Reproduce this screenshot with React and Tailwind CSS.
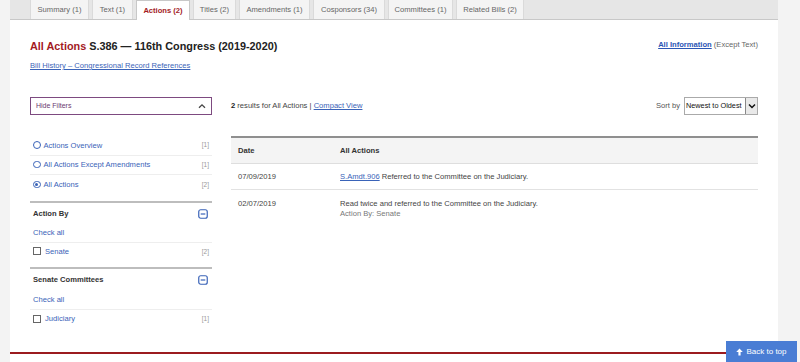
import React from "react";

const font = "font-['Liberation_Sans',Arial,Helvetica,sans-serif]";

function Tab({ label, active, w }) {
  return active ? (
    <div className={`${w} h-[20px] flex items-center justify-center bg-white border-x border-t border-[#c8c8c8] text-[#a31a1f] font-bold text-[7.6px] -mb-px`}>
      {label}
    </div>
  ) : (
    <div className={`${w} h-[19px] flex items-center justify-center bg-[#f4f4f4] border-x border-[#dadada] text-[#666] text-[7.6px]`}>
      {label}
    </div>
  );
}

function Radio({ checked }) {
  return (
    <span className="w-[7.5px] h-[7.5px] rounded-full border-[1.5px] border-[#3a63b8] flex items-center justify-center mr-[3px] shrink-0">
      {checked && <span className="w-[3px] h-[3px] rounded-full bg-[#3a63b8]" />}
    </span>
  );
}

function MinusBox() {
  return (
    <svg width="10" height="10" viewBox="0 0 10 10" className="mr-[2px]">
      <rect x="0.75" y="0.75" width="8.5" height="8.5" rx="2" fill="none" stroke="#3a63b8" strokeWidth="1.2" />
      <line x1="2.7" y1="5" x2="7.3" y2="5" stroke="#3a63b8" strokeWidth="1.2" />
    </svg>
  );
}

function CheckBox() {
  return <span className="w-[8px] h-[8px] border border-[#666] mr-[4px] shrink-0 bg-white" />;
}

export default function App() {
  const tabs = [
    ["Summary (1)", "w-[59px]"],
    ["Text (1)", "w-[41px]"],
    ["Actions (2)", "w-[54px]"],
    ["Titles (2)", "w-[43px]"],
    ["Amendments (1)", "w-[71px]"],
    ["Cosponsors (34)", "w-[72px]"],
    ["Committees (1)", "w-[65px]"],
    ["Related Bills (2)", "w-[68px]"],
  ];
  return (
    <div className={`${font} w-[800px] h-[362px] bg-[#f3f3f3] flex overflow-hidden relative`}>
      <div className="ml-[10px] w-[768px] h-full bg-white flex flex-col">
        {/* tab bar */}
        <div className="h-[20px] shrink-0 bg-[#e6e6e6] border-b border-[#c8c8c8] flex items-start pl-[20px] gap-[3px]">
          {tabs.map(([t, w]) => (
            <Tab key={t} label={t} w={w} active={t === "Actions (2)"} />
          ))}
        </div>

        <div className="px-[20px] flex-1 flex flex-col">
          {/* header */}
          <div className="mt-[19px] flex justify-between items-start">
            <div className="flex flex-col">
              <div className="text-[10.85px] leading-[14px] font-bold text-[#222]">
                <span className="text-[#a31a1f]">All Actions</span> S.386 — 116th Congress (2019-2020)
              </div>
              <a className="mt-[8px] text-[7.6px] leading-[10px] text-[#3a63b8] underline">
                Bill History – Congressional Record References
              </a>
            </div>
            <div className="mt-[1px] text-[7.6px] leading-[10px] text-[#666]">
              <a className="text-[#2b56b5] font-bold underline">All Information</a> (Except Text)
            </div>
          </div>

          {/* body */}
          <div className="mt-[26px] flex gap-[19px]">
            {/* sidebar */}
            <div className="w-[182px] shrink-0 flex flex-col text-[7.6px]">
              <div className="h-[18px] border border-[#7d4a80] px-[5px] flex items-center justify-between text-[#6b3a70]">
                <span className="text-[7px]">Hide Filters</span>
                <svg width="8" height="6" viewBox="0 0 8 6">
                  <path d="M1 4.8 L4 1.8 L7 4.8" fill="none" stroke="#444" strokeWidth="1.3" />
                </svg>
              </div>

              <div className="mt-[21px] flex flex-col">
                {[
                  ["Actions Overview", "[1]", false],
                  ["All Actions Except Amendments", "[1]", false],
                  ["All Actions", "[2]", true],
                ].map(([l, c, ch], i) => (
                  <div
                    key={l}
                    className={`h-[19.5px] flex items-center justify-between pl-[3px] pr-[3px] ${i < 2 ? "border-b border-[#eeeeee]" : ""}`}
                  >
                    <span className="flex items-center text-[#3a63b8]">
                      <Radio checked={ch} />
                      {l}
                    </span>
                    <span className="text-[#999] text-[6.5px]">{c}</span>
                  </div>
                ))}
              </div>

              <div className="mt-[6px] h-[2px] bg-[#bdbdbd]" />
              <div className="h-[22px] flex items-center justify-between pl-[3px] pr-[2px]">
                <span className="font-bold text-[#333]">Action By</span>
                <MinusBox />
              </div>
              <div className="h-[18px] flex items-center pl-[3px] border-b border-[#eeeeee] text-[#3a63b8]">Check all</div>
              <div className="h-[18px] flex items-center justify-between pl-[3px] pr-[3px]">
                <span className="flex items-center text-[#3a63b8]">
                  <CheckBox />
                  Senate
                </span>
                <span className="text-[#999] text-[6.5px]">[2]</span>
              </div>

              <div className="mt-[6px] h-[2px] bg-[#bdbdbd]" />
              <div className="h-[22px] flex items-center justify-between pl-[3px] pr-[2px]">
                <span className="font-bold text-[#333]">Senate Committees</span>
                <MinusBox />
              </div>
              <div className="h-[19px] flex items-center pl-[3px] border-b border-[#eeeeee] text-[#3a63b8]">Check all</div>
              <div className="h-[19px] flex items-center justify-between pl-[3px] pr-[3px]">
                <span className="flex items-center text-[#3a63b8]">
                  <CheckBox />
                  Judiciary
                </span>
                <span className="text-[#999] text-[6.5px]">[1]</span>
              </div>
            </div>

            {/* main */}
            <div className="flex-1 flex flex-col text-[7.6px]">
              <div className="h-[18px] flex items-center justify-between">
                <div className="text-[#444]">
                  <span className="font-bold text-[#222]">2</span> results for All Actions |{" "}
                  <a className="text-[#3a63b8] underline">Compact View</a>
                </div>
                <div className="flex items-center h-full">
                  <span className="text-[#555] mr-[4px]">Sort by</span>
                  <div className="h-[18px] w-[74px] border border-[#aaa] flex items-stretch">
                    <span className="flex-1 flex items-center pl-[1px] text-[#111] text-[7.3px] whitespace-nowrap overflow-hidden">Newest to Oldest</span>
                    <span className="w-[12px] border-l border-[#888] bg-[#e9e9e9] flex items-center justify-center">
                      <svg width="8" height="6" viewBox="0 0 8 6">
                        <path d="M1 1.5 L4 4.5 L7 1.5" fill="none" stroke="#111" strokeWidth="1.5" />
                      </svg>
                    </span>
                  </div>
                </div>
              </div>

              <div className="mt-[21px] border-t-2 border-[#8f8f8f]">
                <div className="h-[26px] bg-[#f4f4f4] border-b border-[#dedede] flex items-center font-bold text-[#333]">
                  <span className="w-[109px] pl-[7px]">Date</span>
                  <span>All Actions</span>
                </div>
                <div className="h-[26px] border-b border-[#e2e2e2] flex items-center text-[#444]">
                  <span className="w-[109px] pl-[7px]">07/09/2019</span>
                  <span>
                    <a className="text-[#3a63b8] underline">S.Amdt.906</a> Referred to the Committee on the Judiciary.
                  </span>
                </div>
                <div className="flex items-start text-[#444] pt-[9px]">
                  <span className="w-[109px] pl-[7px] leading-[10px]">02/07/2019</span>
                  <div className="flex flex-col leading-[10px]">
                    <span>Read twice and referred to the Committee on the Judiciary.</span>
                    <span className="text-[#777]">Action By: Senate</span>
                  </div>
                </div>
              </div>
            </div>
          </div>
        </div>

        <div className="h-[2px] bg-[#9b1b1f] mb-[8px] shrink-0" />
      </div>

      <div className="absolute left-[726px] top-[341px] w-[71px] h-[24px] bg-[#4a7dd4] text-white text-[8px] flex items-center justify-center gap-[3px] pb-[2px]">
        <svg width="7" height="8" viewBox="0 0 7 8">
          <path d="M3.5 0.5 L6.8 4 L4.6 4 L4.6 7.5 L2.4 7.5 L2.4 4 L0.2 4 Z" fill="white" />
        </svg>
        Back to top
      </div>
    </div>
  );
}
